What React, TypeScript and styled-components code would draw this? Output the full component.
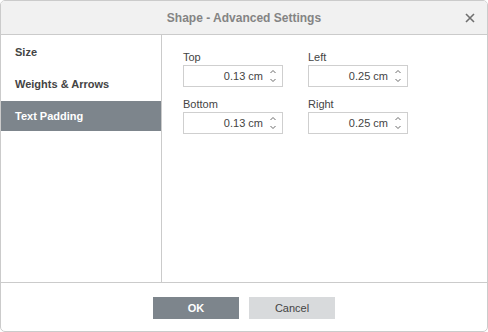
import styled, { createGlobalStyle } from "styled-components";

const GlobalStyle = createGlobalStyle`
  html, body {
    margin: 0;
    padding: 0;
    background: #ffffff;
  }
  body {
    font-family: "Liberation Sans", Arial, sans-serif;
  }
`;

const navItems = ["Size", "Weights & Arrows", "Text Padding"];

const fields = [
  { label: "Top", value: "0.13 cm" },
  { label: "Left", value: "0.25 cm" },
  { label: "Bottom", value: "0.13 cm" },
  { label: "Right", value: "0.25 cm" },
];

const Spinner = () => (
  <svg width="8" height="16" viewBox="0 0 8 16" fill="none">
    <path d="M1.5 5 L4 2.5 L6.5 5" stroke="#5a5a5a" strokeWidth="0.9" />
    <path d="M1.5 11 L4 13.5 L6.5 11" stroke="#5a5a5a" strokeWidth="0.9" />
  </svg>
);

const CloseIcon = () => (
  <svg width="10" height="10" viewBox="0 0 10 10" fill="none">
    <path d="M1 1 L9 9 M9 1 L1 9" stroke="#6f6f6f" strokeWidth="1.6" />
  </svg>
);

export default function App() {
  return (
    <>
      <GlobalStyle />
      <Window>
        <Header>
          <span />
          <Title>Shape - Advanced Settings</Title>
          <CloseButton>
            <CloseIcon />
          </CloseButton>
        </Header>
        <Body>
          <Sidebar>
            {navItems.map((item) => (
              <NavItem key={item} $active={item === "Text Padding"}>
                {item}
              </NavItem>
            ))}
          </Sidebar>
          <Content>
            <FieldGrid>
              {fields.map((f) => (
                <Field key={f.label}>
                  <Label>{f.label}</Label>
                  <SpinInput>
                    <Value>{f.value}</Value>
                    <SpinArrows>
                      <Spinner />
                    </SpinArrows>
                  </SpinInput>
                </Field>
              ))}
            </FieldGrid>
          </Content>
        </Body>
        <Footer>
          <Button $primary>OK</Button>
          <Button>Cancel</Button>
        </Footer>
      </Window>
    </>
  );
}

const Window = styled.div`
  width: 488px;
  height: 332px;
  box-sizing: border-box;
  border: 1px solid #cbcbcb;
  border-radius: 5px;
  overflow: hidden;
  display: flex;
  flex-direction: column;
  background: #ffffff;
`;

const Header = styled.div`
  height: 33px;
  flex-shrink: 0;
  background: #f1f1f1;
  border-bottom: 1px solid #cbcbcb;
  display: grid;
  grid-template-columns: 1fr auto 1fr;
  align-items: center;
`;

const Title = styled.div`
  font-size: 12px;
  font-weight: bold;
  color: #848484;
`;

const CloseButton = styled.div`
  justify-self: end;
  display: flex;
  align-items: center;
  justify-content: center;
  width: 14px;
  height: 14px;
  margin-right: 10px;
  margin-top: 1px;
`;

const Body = styled.div`
  flex: 1;
  display: flex;
  min-height: 0;
`;

const Sidebar = styled.div`
  width: 160px;
  flex-shrink: 0;
  border-right: 1px solid #cbcbcb;
  display: flex;
  flex-direction: column;
  gap: 2px;
  padding-top: 2px;
`;

const NavItem = styled.div<{ $active?: boolean }>`
  height: 30px;
  display: flex;
  align-items: center;
  padding-left: 14px;
  font-size: 11px;
  font-weight: bold;
  color: ${(p) => (p.$active ? "#ffffff" : "#444444")};
  background: ${(p) => (p.$active ? "#7d858c" : "transparent")};
`;

const Content = styled.div`
  flex: 1;
  padding: 15px 0 0 21px;
`;

const FieldGrid = styled.div`
  display: grid;
  grid-template-columns: 100px 100px;
  column-gap: 25px;
  row-gap: 10px;
`;

const Field = styled.div`
  display: flex;
  flex-direction: column;
  gap: 1px;
`;

const Label = styled.div`
  font-size: 11px;
  line-height: 14px;
  color: #444444;
`;

const SpinInput = styled.div`
  height: 22px;
  box-sizing: border-box;
  border: 1px solid #cfcfcf;
  display: flex;
  align-items: center;
  font-size: 11px;
  color: #444444;
`;

const Value = styled.span`
  flex: 1;
  text-align: right;
  padding-right: 6px;
`;

const SpinArrows = styled.div`
  width: 8px;
  height: 16px;
  margin-right: 5px;
  display: flex;
`;

const Footer = styled.div`
  height: 49px;
  box-sizing: border-box;
  flex-shrink: 0;
  border-top: 1px solid #cbcbcb;
  display: flex;
  justify-content: center;
  align-items: flex-start;
  gap: 10px;
  padding-top: 14px;
`;

const Button = styled.div<{ $primary?: boolean }>`
  width: 86px;
  height: 22px;
  display: flex;
  align-items: center;
  justify-content: center;
  font-size: 11px;
  font-weight: ${(p) => (p.$primary ? "bold" : "normal")};
  color: ${(p) => (p.$primary ? "#ffffff" : "#444444")};
  background: ${(p) => (p.$primary ? "#7d858c" : "#d8dadc")};
`;
